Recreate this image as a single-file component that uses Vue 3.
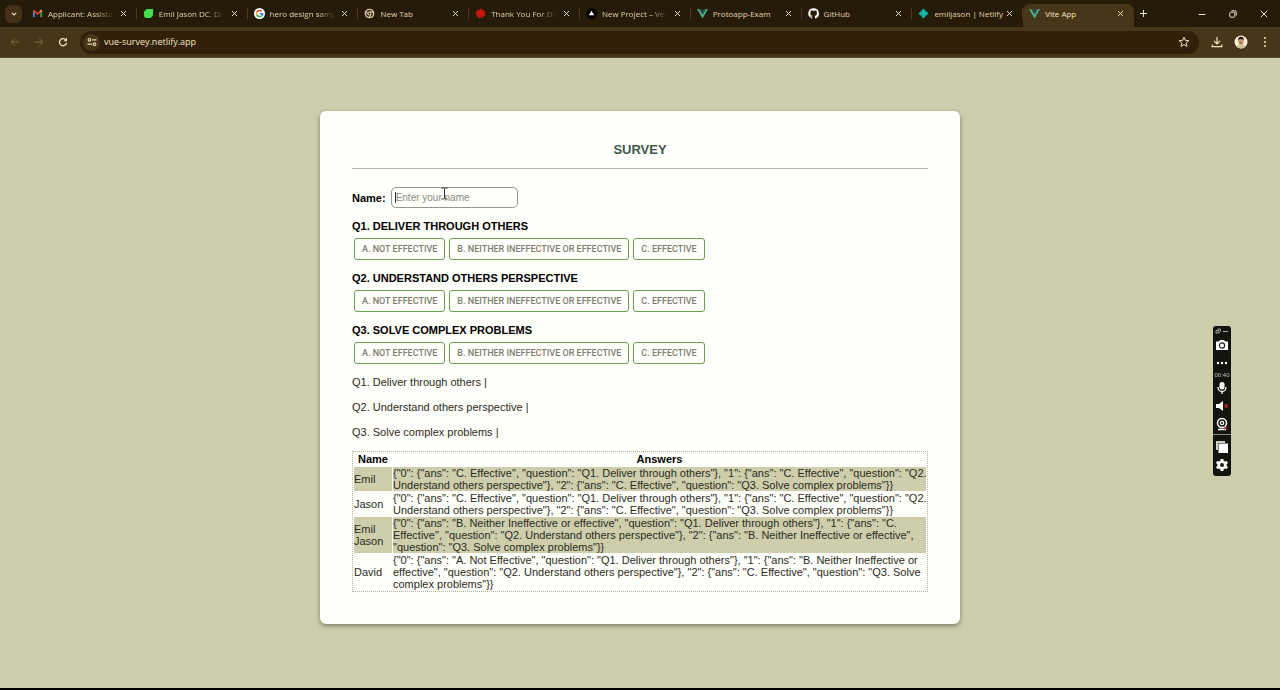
<script setup>
import { ref } from 'vue'

const tabs = [
  { title: 'Applicant: Assista', icon: 'gmail', long: true },
  { title: 'Emil Jason DC. Di', icon: 'leaf', long: true },
  { title: 'hero design samp', icon: 'google', long: true },
  { title: 'New Tab', icon: 'chrome' },
  { title: 'Thank You For Do', icon: 'burst', long: true },
  { title: 'New Project – Ver', icon: 'vercel', long: true },
  { title: 'Protoapp-Exam', icon: 'vue' },
  { title: 'GitHub', icon: 'github' },
  { title: 'emiljason | Netlify', icon: 'netlify' },
  { title: 'Vite App', icon: 'vue', active: true },
]

const choices = ['A. Not Effective', 'B. Neither Ineffective or effective', 'C. Effective']
const questions = ref([
  { text: 'Q1. Deliver through others', ans: '' },
  { text: 'Q2. Understand others perspective', ans: '' },
  { text: 'Q3. Solve complex problems', ans: '' },
])
const name = ref('')

const rows = [
  {
    name: 'Emil',
    answers:
      '{"0": {"ans": "C. Effective", "question": "Q1. Deliver through others"}, "1": {"ans": "C. Effective", "question": "Q2.\nUnderstand others perspective"}, "2": {"ans": "C. Effective", "question": "Q3. Solve complex problems"}}',
  },
  {
    name: 'Jason',
    answers:
      '{"0": {"ans": "C. Effective", "question": "Q1. Deliver through others"}, "1": {"ans": "C. Effective", "question": "Q2.\nUnderstand others perspective"}, "2": {"ans": "C. Effective", "question": "Q3. Solve complex problems"}}',
  },
  {
    name: 'Emil Jason',
    answers:
      '{"0": {"ans": "B. Neither Ineffective or effective", "question": "Q1. Deliver through others"}, "1": {"ans": "C.\nEffective", "question": "Q2. Understand others perspective"}, "2": {"ans": "B. Neither Ineffective or effective",\n"question": "Q3. Solve complex problems"}}',
  },
  {
    name: 'David',
    answers:
      '{"0": {"ans": "A. Not Effective", "question": "Q1. Deliver through others"}, "1": {"ans": "B. Neither Ineffective or\neffective", "question": "Q2. Understand others perspective"}, "2": {"ans": "C. Effective", "question": "Q3. Solve\ncomplex problems"}}',
  },
]
</script>

<template>
  <div class="window">
    <header class="chrome">
      <div class="strip">
        <button class="search-tabs" aria-label="Search tabs">
          <svg width="8" height="8" viewBox="0 0 8 8"><path d="M1.8 2.8 4 5l2.2-2.2" fill="none" stroke="#e6d9b4" stroke-width="1.2" /></svg>
        </button>
        <nav class="tabs">
          <div v-for="(t, i) in tabs" :key="i" class="tab" :class="{ active: t.active }">
            <svg class="fav" viewBox="0 0 12 12" aria-hidden="true">
              <g v-if="t.icon === 'gmail'" fill="none" stroke-width="2">
                <path d="M2 10V3" stroke="#4a7fd0" /><path d="M10 10V3" stroke="#3fa04e" />
                <path d="M1.6 2.8 6 6.4l4.4-3.6" stroke="#e0402f" />
                <path d="M9.2 3.8 10.6 2.6" stroke="#f0b62c" />
              </g>
              <path v-else-if="t.icon === 'leaf'" d="M4 1h7v6.500L8.500 11H3L1 9V4z" fill="#45e04f" />
              <g v-else-if="t.icon === 'google'" fill="none" stroke-width="1.7">
                <circle cx="6" cy="6" r="6" fill="#fff" />
                <path d="M8.400 3.600A3.400 3.400 0 0 0 3 4.500" stroke="#e5432f" />
                <path d="M3 4.500a3.400 3.400 0 0 0 0 3" stroke="#f2b51d" />
                <path d="M3 7.500a3.400 3.400 0 0 0 5.400 1" stroke="#38a852" />
                <path d="M8.400 8.500A3.400 3.400 0 0 0 9.400 6.200H6.200" stroke="#3e7de0" />
              </g>
              <g v-else-if="t.icon === 'chrome'" fill="none" stroke="#d9c9a8">
                <circle cx="6" cy="6" r="4.500" stroke-width="1.600" />
                <circle cx="6" cy="6" r="1.700" stroke-width="1.200" />
                <path d="M6 4.200h4.200M4.400 6.900 2.300 3.500M7.500 7l-2 3.500" stroke-width="1.200" />
              </g>
              <path v-else-if="t.icon === 'burst'" d="m6 0 1.200 2L9.500 1.300 9.700 3.600 12 4.500 10.600 6.300 11.600 8.500 9.300 8.900 8.600 11.200 6.500 10.200 4.500 11.600 3.700 9.400 1.200 9.200 1.800 7 0 5.300 2.200 4.200 2.200 1.800 4.500 2.200z" fill="#c3160c" />
              <g v-else-if="t.icon === 'vercel'">
                <circle cx="6" cy="6" r="6" fill="#060402" /><path d="M6 3 8.800 8H3.200z" fill="#fff" />
              </g>
              <g v-else-if="t.icon === 'vue'">
                <path d="M0 1h2.400L6 7.300 9.600 1H12L6 11.500z" fill="#42b585" />
                <path d="M2.400 1h2.200L6 3.500 7.400 1h2.200L6 7.300z" fill="#35505a" />
              </g>
              <path v-else-if="t.icon === 'github'" d="M6 .3a5.700 5.700 0 0 0-1.800 11.100c.3 0 .4-.1.400-.3v-1c-1.600.3-1.900-.8-1.900-.8-.3-.7-.6-.8-.6-.8-.5-.4 0-.4 0-.4.6 0 .9.600.9.600.5.900 1.300.6 1.700.5 0-.4.2-.6.4-.8-1.300-.1-2.600-.6-2.600-2.800 0-.6.200-1.100.6-1.500-.1-.2-.3-.8 0-1.600 0 0 .5-.1 1.600.6a5.500 5.500 0 0 1 2.900 0c1.100-.7 1.600-.6 1.600-.6.3.8.100 1.400 0 1.600.4.400.6.900.6 1.500 0 2.200-1.300 2.700-2.600 2.800.2.200.4.500.4 1.100v1.600c0 .2.100.3.400.3A5.700 5.700 0 0 0 6 .3z" fill="#fff" />
              <g v-else>
                <path d="m6 .5 5.500 5.500L6 11.500.5 6z" fill="#0fa79b" />
                <path d="M6 2v8M2 6h8" stroke="#3bd0bb" stroke-width=".6" />
              </g>
            </svg>
            <span class="title" :class="{ fade: t.long }">{{ t.title }}</span>
            <button class="close" :aria-label="'Close ' + t.title">
              <svg width="7" height="7" viewBox="0 0 7 7"><path d="m1 1 5 5M6 1 1 6" stroke="#e6d9b4" /></svg>
            </button>
          </div>
        </nav>
        <button class="plus" aria-label="New tab">
          <svg width="9" height="9" viewBox="0 0 9 9"><path d="M4.500 1v7M1 4.500h7" stroke="#efe3c0" /></svg>
        </button>
        <div class="controls">
          <button aria-label="Minimize"><svg width="8" height="8" viewBox="0 0 8 8"><path d="M.5 4.500h7" stroke="#efe3c0" /></svg></button>
          <button aria-label="Restore"><svg width="8" height="8" viewBox="0 0 8 8" fill="none" stroke="#efe3c0"><rect x=".8" y="2.200" width="5" height="5" rx="1" /><path d="M2.500.8H6a1.200 1.200 0 0 1 1.200 1.200v3.500" /></svg></button>
          <button aria-label="Close window"><svg width="8" height="8" viewBox="0 0 8 8"><path d="m.8.8 6.400 6.400M7.200.8.8 7.200" stroke="#efe3c0" /></svg></button>
        </div>
      </div>

      <div class="toolbar">
        <div class="nav">
          <button aria-label="Back"><svg width="10" height="10" viewBox="0 0 10 10"><path d="M9 5H1.500M4.800 1.500 1.300 5l3.500 3.500" fill="none" stroke="#806b45" /></svg></button>
          <button aria-label="Forward"><svg width="10" height="10" viewBox="0 0 10 10"><path d="M1 5h7.500M5.200 1.500 8.700 5 5.200 8.500" fill="none" stroke="#806b45" /></svg></button>
          <button aria-label="Reload"><svg width="10" height="10" viewBox="0 0 10 10"><path d="M8.300 3.500A3.600 3.600 0 1 0 8.600 6" fill="none" stroke="#efe3c0" stroke-width="1.300" /><path d="M9 .8V4.300H5.500z" fill="#efe3c0" /></svg></button>
        </div>
        <div class="omnibox">
          <button class="site" aria-label="Site information">
            <svg width="10" height="10" viewBox="0 0 10 10" fill="none" stroke="#e6d9b4" stroke-width="1.200"><circle cx="2.500" cy="2.800" r="1.300" /><path d="M5 2.800h4.500M.5 7.200H5" /><circle cx="7.500" cy="7.200" r="1.300" /></svg>
          </button>
          <input class="url" type="text" value="vue-survey.netlify.app" aria-label="Address" />
          <button class="star" aria-label="Bookmark">
            <svg width="12" height="12" viewBox="0 0 12 12"><path d="m6 1.200 1.400 3.200 3.500.3-2.700 2.300.8 3.400L6 8.600 3 10.400l.8-3.400L1.100 4.700l3.500-.3z" fill="none" stroke="#efe3c0" /></svg>
          </button>
        </div>
        <div class="tools">
          <button aria-label="Downloads"><svg width="12" height="12" viewBox="0 0 12 12"><path d="M6 1v6.500M3 4.800l3 3 3-3M1.200 8.500v2.200h9.600V8.500" fill="none" stroke="#efe3c0" stroke-width="1.200" /></svg></button>
          <button aria-label="Profile">
            <svg width="14" height="14" viewBox="0 0 14 14"><circle cx="7" cy="7" r="6.500" fill="#f6f0d8" /><path d="M2.500 11.700C3.500 9.800 5 9.600 7 9.600s3.500.2 4.500 2.100A6.500 6.500 0 0 1 2.500 11.700z" fill="#cfc49c" /><ellipse cx="7" cy="6.500" rx="2.600" ry="3.300" fill="#c79b70" /><path d="M4 6C3.700 3 5 1.800 7 1.800S10.300 3 10 6L9.200 4.300H5z" fill="#2a1a10" /><path d="M5.700 8h2.600" stroke="#5b3523" stroke-width=".7" /></svg>
          </button>
          <button aria-label="Menu"><svg width="4" height="12" viewBox="0 0 4 12" fill="#efe3c0"><circle cx="2" cy="2" r="1" /><circle cx="2" cy="6" r="1" /><circle cx="2" cy="10" r="1" /></svg></button>
        </div>
      </div>
    </header>

    <main class="page">
      <section class="card">
        <h1>SURVEY</h1>
        <div class="name-row">
          <label for="name">Name:</label>
          <span class="field">
            <input id="name" v-model="name" type="text" placeholder="Enter your name" />
            <i class="caret"></i>
            <svg class="ibeam" width="7" height="13" viewBox="0 0 7 13"><path d="M.5 1h2l1 .8 1-.8h2M3.500 1.500v10M.5 12h2l1-.8 1 .8h2" fill="none" stroke="#333" /></svg>
          </span>
        </div>

        <div v-for="q in questions" :key="q.text" class="question">
          <h2>{{ q.text }}</h2>
          <div class="choices">
            <button v-for="c in choices" :key="c" @click="q.ans = c">{{ c }}</button>
          </div>
        </div>

        <p v-for="q in questions" :key="q.text" class="summary">{{ q.text }} | {{ q.ans }}</p>

        <table>
          <thead>
            <tr><th scope="col" class="who">Name</th><th scope="col">Answers</th></tr>
          </thead>
          <tbody>
            <tr v-for="r in rows" :key="r.name">
              <td>{{ r.name }}</td>
              <td class="answers">{{ r.answers }}</td>
            </tr>
          </tbody>
        </table>
      </section>
    </main>

    <aside class="recorder" aria-label="Recorder">
      <div class="top">
        <svg width="14" height="6" viewBox="0 0 14 6" fill="none" stroke="#cfcfbf"><path d="M1 2.500h3v2.500H1zM2.500 1h3v2.500M8 3.500h5" stroke-width=".8" /></svg>
      </div>
      <button aria-label="Screenshot"><svg width="14" height="12" viewBox="0 0 14 12"><path d="M1 2.500h3L5 1h4l1 1.500h3V11H1z" fill="#fff" /><circle cx="7" cy="6.500" r="2.600" fill="none" stroke="#222" stroke-width="1.200" /></svg></button>
      <button class="short" aria-label="More"><svg width="14" height="4" viewBox="0 0 14 4" fill="#fff"><circle cx="3" cy="2" r="1.200" /><circle cx="7" cy="2" r="1.200" /><circle cx="11" cy="2" r="1.200" /></svg></button>
      <span class="time">00:40</span>
      <button aria-label="Microphone"><svg width="12" height="14" viewBox="0 0 12 14"><rect x="3.500" y="1" width="5" height="7.500" rx="2.500" fill="#fff" /><path d="M2 6v.5a4 4 0 0 0 8 0V6M6 10.500V13" fill="none" stroke="#fff" stroke-width="1.300" /></svg></button>
      <button aria-label="Sound"><svg width="14" height="12" viewBox="0 0 14 12"><path d="M1 4h3l4-3v10L4 8H1z" fill="#fff" /><path d="m9.800 4.300 3 3.200m0-3.200-3 3.200" stroke="#b1202f" stroke-width="1.600" /></svg></button>
      <button aria-label="Webcam"><svg width="14" height="14" viewBox="0 0 14 14" fill="none" stroke="#fff"><circle cx="7" cy="6" r="4.500" stroke-width="1.500" /><circle cx="7" cy="6" r="1.700" stroke-width="1.200" /><path d="M3 12.500h8" stroke-width="1.500" /><path d="m9.500 9.500 3 3m0-3-3 3" stroke="#b1202f" /></svg></button>
      <hr />
      <button class="tall" aria-label="Windows"><svg width="14" height="14" viewBox="0 0 14 14"><path d="M1 1h9v2H3v7H1z" fill="#cfcfbf" /><path d="M3.500 3.500H13V13H3.500z" fill="#fff" /></svg></button>
      <button aria-label="Settings"><svg width="14" height="14" viewBox="0 0 14 14"><path d="M5.700 1h2.600l.4 1.800 1.200.7 1.800-.6L13 5.100l-1.400 1.200v1.400L13 8.900l-1.300 2.200-1.800-.6-1.200.7-.4 1.800H5.700l-.4-1.800-1.200-.7-1.800.6L1 8.900l1.400-1.200V6.300L1 5.100l1.300-2.200 1.800.6 1.200-.7z" fill="#fff" /><circle cx="7" cy="7" r="2" fill="#1a1a14" /></svg></button>
    </aside>
  </div>
</template>

<style>
body {
  background: #cecead;
}
</style>

<style scoped>
* {
  box-sizing: border-box;
}
.window {
  display: flex;
  flex-direction: column;
  min-height: 100vh;
  background: #cecead;
  border-bottom: 2px solid #000;
  font: 11px/12px "Liberation Sans", Arial, sans-serif;
  color: #2c2c22;
}
button {
  flex: none;
  display: inline-flex;
  align-items: center;
  justify-content: center;
  padding: 0;
  border: 0;
  background: none;
  font: inherit;
  color: inherit;
}
.chrome {
  font-family: "Open Sans", "Noto Sans", sans-serif;
  font-size: 8px;
  color: #e0d2a8;
}
.strip {
  display: flex;
  align-items: center;
  height: 27px;
  background: #251b08;
}
.search-tabs {
  width: 17px;
  height: 18px;
  margin: 0 4px 0 5px;
  border-radius: 6px;
  background: #443118;
}
.tabs {
  flex: 1;
  min-width: 0;
  display: flex;
  align-self: stretch;
}
.tab {
  flex: 1 1 0;
  min-width: 0;
  display: flex;
  align-items: center;
  margin-top: 4px;
  padding: 0 10px 4px 6px;
  position: relative;
}
.tab::after {
  content: "";
  position: absolute;
  right: 0;
  top: 4px;
  width: 1px;
  height: 11px;
  background: #4b3920;
}
.tab.active {
  background: #483619;
  border-radius: 7px 7px 0 0;
}
.tab.active::after {
  display: none;
}
.fav {
  flex: none;
  width: 11px;
  height: 11px;
  margin-right: 5px;
}
.title {
  flex: 1;
  min-width: 0;
  white-space: nowrap;
}
.fade {
  mask-image: linear-gradient(to right, #000 48px, transparent 66px);
}
.active .title {
  color: #f2e6c2;
}
.plus {
  width: 18px;
  height: 20px;
}
.controls {
  display: flex;
  gap: 15px;
  margin: 0 8px 0 42px;
}
.controls button {
  width: 16px;
  height: 16px;
}
.toolbar {
  display: flex;
  align-items: center;
  height: 31px;
  padding: 0 7px;
  background: #483619;
  border-bottom: 1px solid #5c5033;
}
.nav {
  display: flex;
  gap: 8px;
  margin-right: 9px;
}
.nav button {
  width: 16px;
  height: 16px;
}
.omnibox {
  flex: 1;
  display: flex;
  align-items: center;
  height: 23px;
  padding: 0 9px 0 3px;
  border-radius: 12px;
  background: #33200b;
}
.site {
  width: 17px;
  height: 17px;
  border-radius: 50%;
  background: #483619;
}
.url {
  flex: 1;
  border: 0;
  padding: 0;
  margin-left: 4px;
  background: none;
  outline: none;
  font: inherit;
  font-size: 9px;
  color: #f2e6c2;
}
.tools {
  display: flex;
  gap: 8px;
  margin-left: 10px;
}
.tools button {
  width: 16px;
  height: 16px;
}
.page {
  flex: 1;
  padding: 53px 16px;
}
.card {
  max-width: 640px;
  margin: 0 auto;
  padding: 32px;
  border-radius: 6px;
  background: #fefefa;
  box-shadow: 0 2px 5px rgba(0, 0, 0, 0.4);
}
h1 {
  margin: 0 0 18px;
  padding-bottom: 11px;
  border-bottom: 1px solid #b4b4a4;
  font-size: 13px;
  line-height: 14px;
  text-align: center;
  color: #41584f;
}
.name-row {
  display: flex;
  align-items: center;
  gap: 5px;
  margin-bottom: 12px;
}
label {
  font-weight: bold;
  color: #000;
}
.field {
  position: relative;
  display: flex;
}
.field input {
  width: 127px;
  height: 21px;
  padding: 0 4px;
  border: 1px solid #96968a;
  border-radius: 5px;
  background: transparent;
  font: inherit;
  font-size: 10px;
}
.field input::placeholder {
  color: #8c8c80;
}
.caret {
  position: absolute;
  left: 4px;
  top: 5px;
  width: 1px;
  height: 11px;
  background: #333;
}
.ibeam {
  position: absolute;
  left: 50px;
  top: 0;
}
.question {
  margin-bottom: 12px;
}
h2 {
  margin: 0;
  font-size: 11px;
  line-height: 12px;
  text-transform: uppercase;
  color: #000;
}
.choices {
  display: flex;
  flex-wrap: wrap;
  gap: 4px;
  padding: 6px 2px 0;
}
.choices button {
  height: 22px;
  padding: 0 7px;
  border: 1px solid #68a052;
  border-radius: 3px;
  font-family: Roboto, "Liberation Sans", sans-serif;
  font-size: 9px;
  font-weight: 500;
  text-transform: uppercase;
  color: #7d7d70;
}
.summary {
  margin: 0 0 13px;
}
table {
  width: 100%;
  table-layout: fixed;
  border: 1px dotted #b4b4a4;
  border-spacing: 1px;
}
th {
  padding: 0 0 1px;
  color: #000;
}
.who {
  width: 38px;
}
td {
  padding: 0;
}
tbody tr:nth-child(odd) td {
  background: #cecead;
}
.answers {
  white-space: pre;
}
.recorder {
  position: fixed;
  right: 49px;
  top: 326px;
  width: 18px;
  display: flex;
  flex-direction: column;
  align-items: center;
  padding-bottom: 2px;
  border-radius: 3px;
  background: #14140f;
}
.recorder .top {
  display: flex;
  align-items: center;
  height: 10px;
}
.recorder button {
  width: 18px;
  height: 18px;
}
.recorder .short {
  height: 17px;
}
.time {
  font-size: 6px;
  line-height: 8px;
  color: #c4c4b4;
}
.recorder hr {
  width: 100%;
  margin: 1px 0 3px;
  border: 0;
  border-top: 1px solid #88887c;
}
</style>
